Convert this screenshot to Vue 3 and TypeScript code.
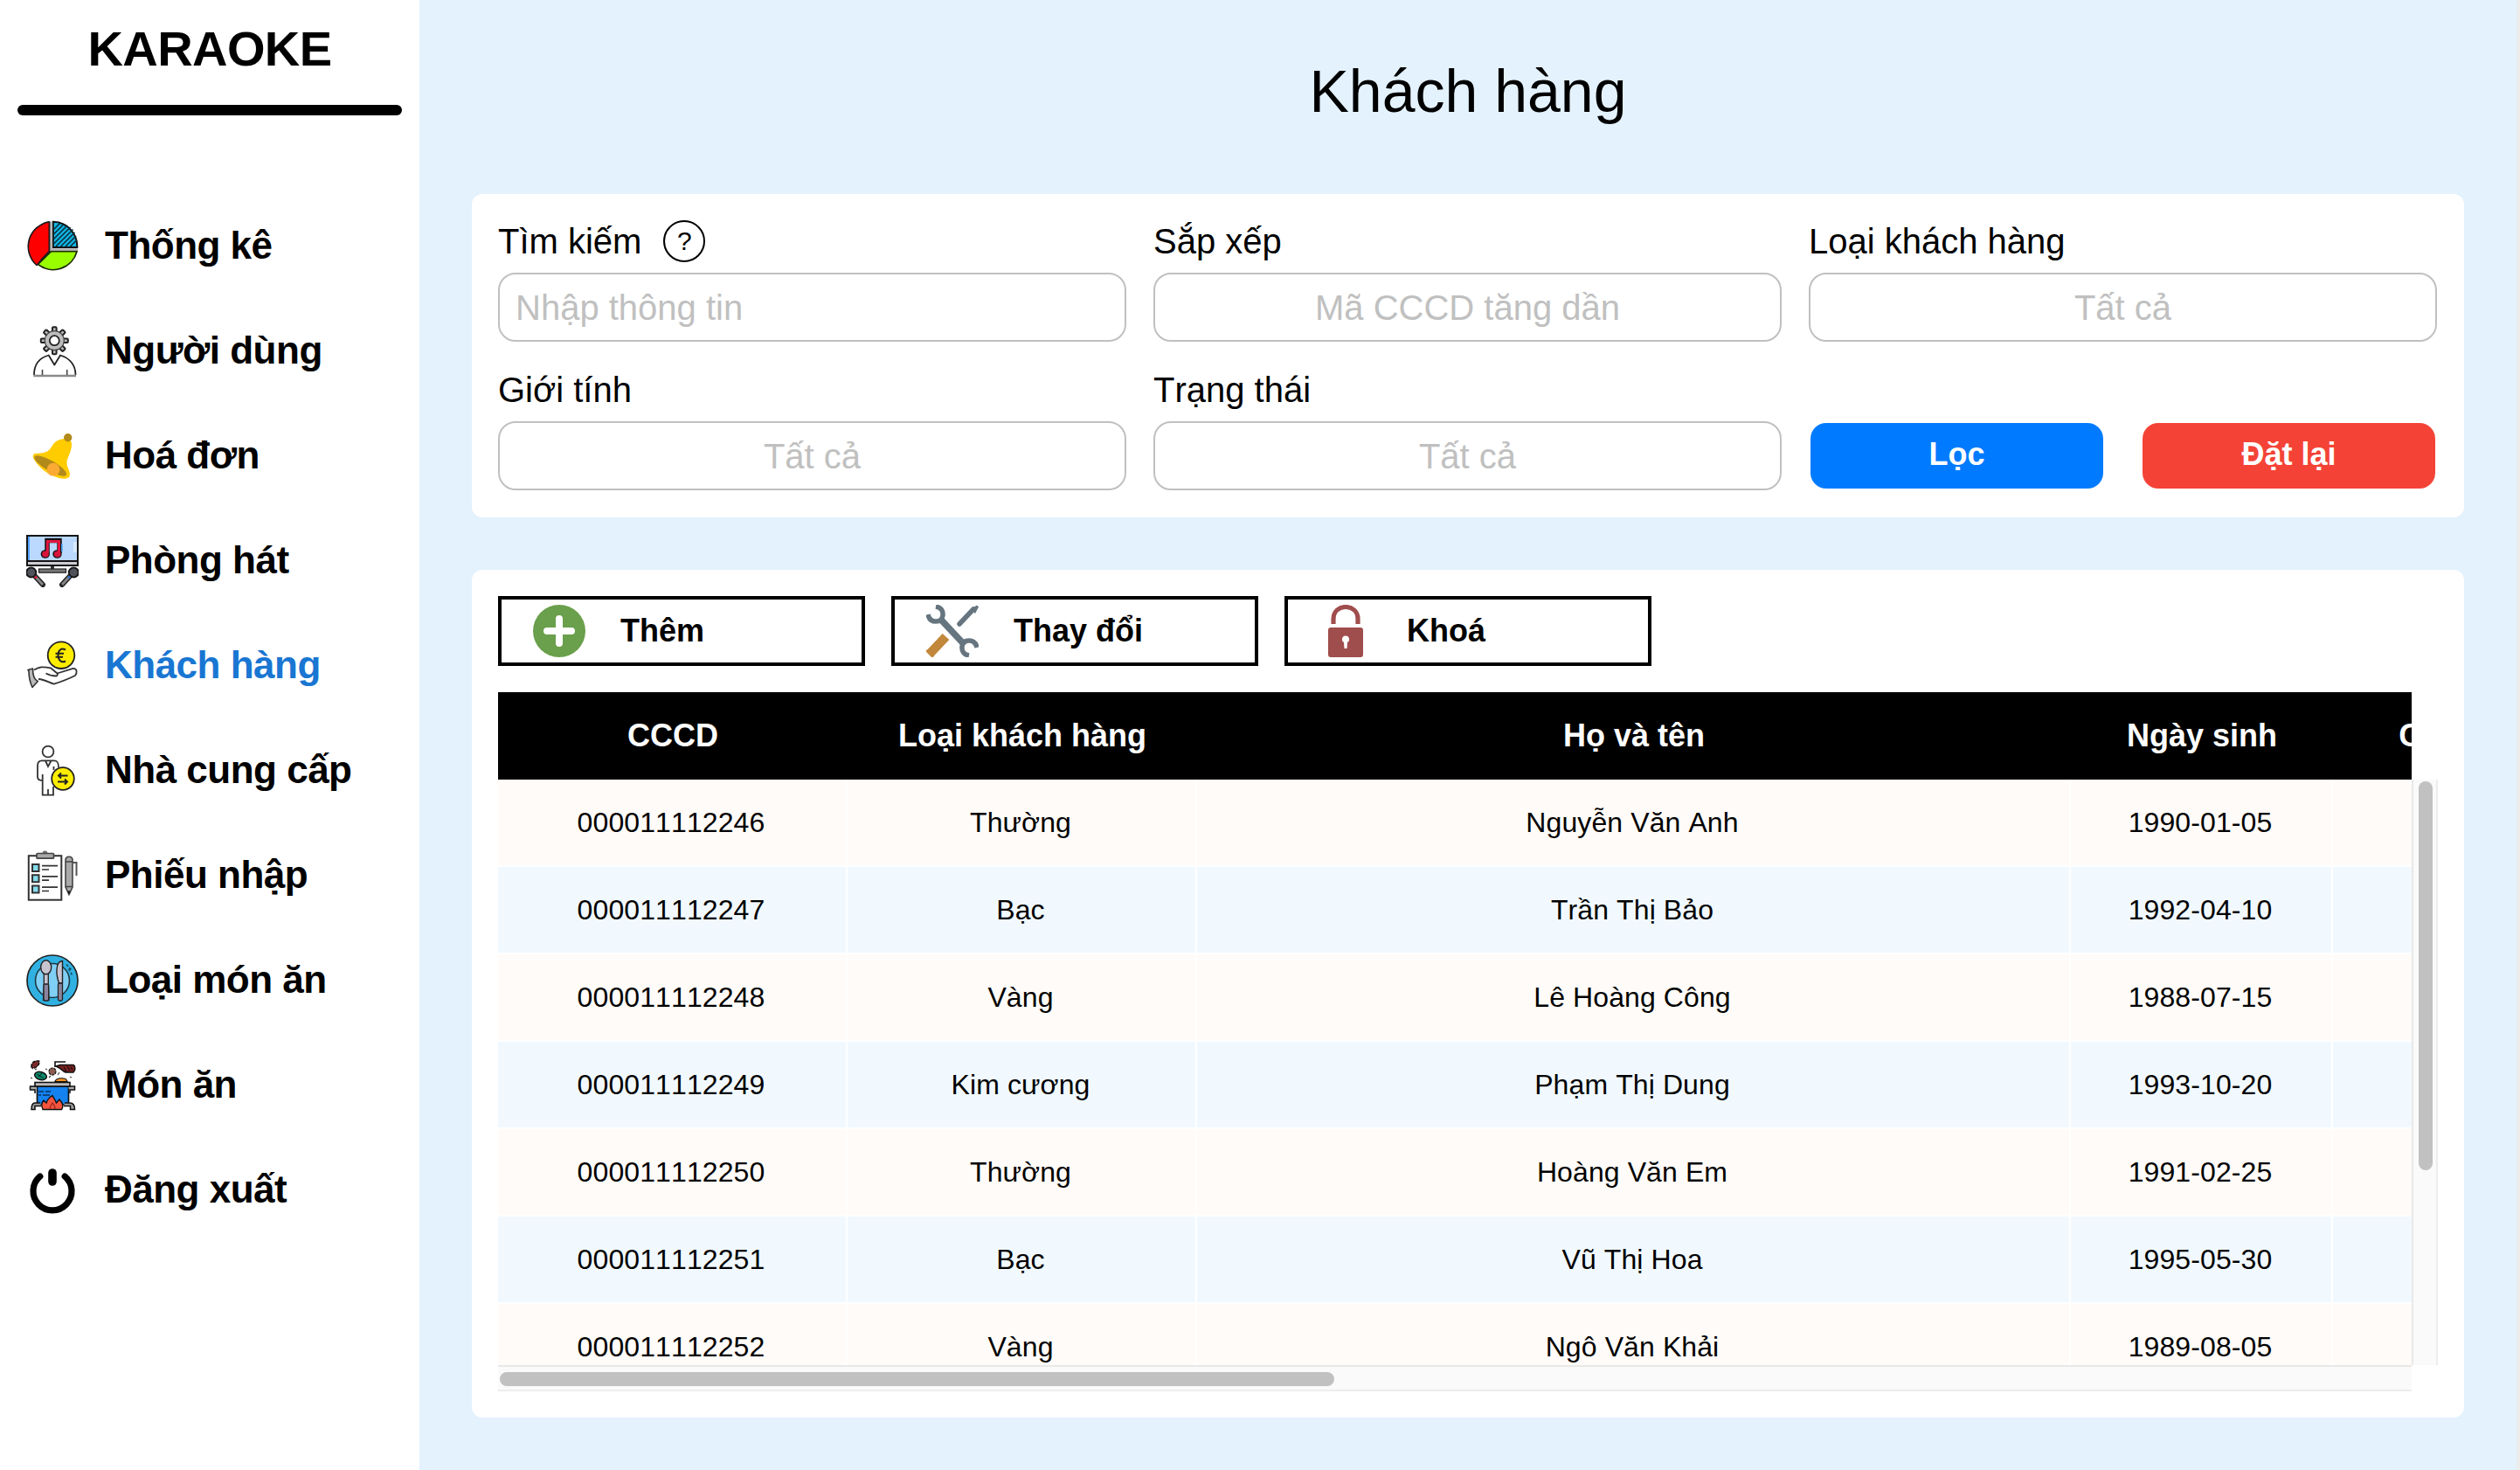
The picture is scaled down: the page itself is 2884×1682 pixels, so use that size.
<script setup lang="ts">
interface MenuItem {
  icon: string
  label: string
  active?: boolean
}

interface Customer {
  id: string
  type: string
  name: string
  birthday: string
}

const menu: MenuItem[] = [
  { icon: 'chart', label: 'Thống kê' },
  { icon: 'user', label: 'Người dùng' },
  { icon: 'bell', label: 'Hoá đơn' },
  { icon: 'room', label: 'Phòng hát' },
  { icon: 'customer', label: 'Khách hàng', active: true },
  { icon: 'supplier', label: 'Nhà cung cấp' },
  { icon: 'receipt', label: 'Phiếu nhập' },
  { icon: 'plate', label: 'Loại món ăn' },
  { icon: 'pot', label: 'Món ăn' },
  { icon: 'power', label: 'Đăng xuất' },
]

const columns: string[] = ['CCCD', 'Loại khách hàng', 'Họ và tên', 'Ngày sinh', 'Giới tính']

const customers: Customer[] = [
  { id: '000011112246', type: 'Thường', name: 'Nguyễn Văn Anh', birthday: '1990-01-05' },
  { id: '000011112247', type: 'Bạc', name: 'Trần Thị Bảo', birthday: '1992-04-10' },
  { id: '000011112248', type: 'Vàng', name: 'Lê Hoàng Công', birthday: '1988-07-15' },
  { id: '000011112249', type: 'Kim cương', name: 'Phạm Thị Dung', birthday: '1993-10-20' },
  { id: '000011112250', type: 'Thường', name: 'Hoàng Văn Em', birthday: '1991-02-25' },
  { id: '000011112251', type: 'Bạc', name: 'Vũ Thị Hoa', birthday: '1995-05-30' },
  { id: '000011112252', type: 'Vàng', name: 'Ngô Văn Khải', birthday: '1989-08-05' },
]

const gearTeeth: number[] = [0, 45, 90, 135, 180, 225, 270, 315]
</script>

<template>
  <div class="app">
    <aside class="sidebar">
      <div class="brand">KARAOKE</div>
      <div class="rule"></div>
      <nav class="menu">
        <a v-for="item in menu" :key="item.label" class="menu-item" :class="{ active: item.active }">
          <svg class="icon" viewBox="0 0 60 60" fill="none">
            <g v-if="item.icon === 'chart'">
              <path d="M26.500 2A28 28 0 0 0 12 50.500L26.500 35.500Z" fill="#f00" stroke="#1c1c1c" stroke-width="1.600" />
              <path d="M30.800 1.800A28 28 0 0 1 58.300 31H30.800Z" fill="#12b5e5" stroke="#111" stroke-width="2" />
              <path d="M31.500 10.500L38.500 3.500M31.500 16L43 4.500M31.500 21.500L47 6M31.500 27L50.500 8M34 30L53.500 10.500M39.500 30L55.500 14M45 30L57 18M50.500 30L58 22.500" stroke="#06323f" stroke-width="1.700" />
              <path d="M28.500 1.500V33.300H59" stroke="#b4b4b4" stroke-width="2.200" />
              <path d="M13.500 50.500L28.500 35.700H58A28 28 0 0 1 13.500 50.500Z" fill="#9f0" stroke="#1c2c00" stroke-width="1.700" />
              <path d="M26.500 1.900A28.500 28.500 0 0 0 12 51.500L16 46L20 20Z" fill="#f00" />
              <path d="M26.500 1.900A28.500 28.500 0 0 0 12 51.500L26.500 35.500V1.900" stroke="#1c1c1c" stroke-width="1.600" />
            </g>
            <g v-else-if="item.icon === 'user'">
              <g fill="#bdbdbd" stroke="#222" stroke-width="2">
                <rect v-for="a in gearTeeth" :key="a" x="30" y="2.200" width="4.600" height="8" rx="1" :transform="`rotate(${a} 32.300 17.700)`" />
              </g>
              <circle cx="32.300" cy="17.700" r="11" fill="#bdbdbd" stroke="#444" stroke-width="1.200" />
              <circle cx="32.300" cy="17.700" r="5.500" fill="#fff" stroke="#222" stroke-width="1.800" />
              <path d="M9 57C9 47 13 38 25.700 34.500L32.300 45.500L39 34.500C51 38 56.500 47 56.500 57" stroke="#222" stroke-width="1.800" stroke-linejoin="round" />
              <path d="M8.300 58H57" stroke="#8a8a8a" stroke-width="2.400" />
              <path d="M18.500 51V57M46.700 51V57" stroke="#444" stroke-width="1.600" />
            </g>
            <g v-else-if="item.icon === 'bell'">
              <path d="M45 10C37 10 32 13.500 28.500 20C25 26 19 26.500 10 27C7 28 7 31 9.500 34.500C15 43 24 51 36.700 54.700C41 56 46 56.500 49 54C51 51 49.500 47 48 44C45.500 38 46.500 35 48.500 30C51 24 53 18 51.500 13.500C50 10.500 48 10 45 10Z" fill="#fc0" />
              <ellipse cx="27.700" cy="41" rx="21" ry="6" fill="#b28a1b" transform="rotate(30 27.700 41)" />
              <circle cx="31" cy="45.200" r="7.400" fill="#fbab33" />
              <circle cx="47.700" cy="8.800" r="4.700" fill="#b28a1b" />
            </g>
            <g v-else-if="item.icon === 'room'">
              <rect width="60" height="36" fill="#151515" />
              <rect x="2" y="2" width="56" height="27" fill="#bbd9ff" />
              <path d="M3 2V29" stroke="#56a5ff" stroke-width="2" />
              <path d="M54 8V20H58V8Z" fill="#d9eaff" />
              <rect x="2" y="31" width="56" height="3" fill="#ceccd3" />
              <path d="M24 21V6.500H38V21" stroke="#151515" stroke-width="5.500" />
              <path d="M40.800 10V19" stroke="#3f9af8" stroke-width="1.500" />
              <ellipse cx="21.800" cy="22" rx="5.200" ry="4.800" fill="#151515" />
              <ellipse cx="35.500" cy="22" rx="5.200" ry="4.800" fill="#151515" />
              <path d="M24.300 21V7.500H37.500V21" stroke="#e5153f" stroke-width="3" />
              <ellipse cx="22" cy="22" rx="3.800" ry="3.400" fill="#d9143b" />
              <ellipse cx="35.700" cy="22" rx="3.800" ry="3.400" fill="#d9143b" />
              <path d="M30 36V40" stroke="#333" stroke-width="4" />
              <rect x="14.500" y="39" width="31" height="4.200" fill="#777" stroke="#222" stroke-width="1.200" />
              <path d="M8 45L19 57" stroke="#222" stroke-width="6" stroke-linecap="round" />
              <path d="M8 45L19 57" stroke="#858585" stroke-width="3" />
              <circle cx="5.700" cy="43" r="5.500" fill="#50525c" stroke="#171717" stroke-width="2" />
              <circle cx="11" cy="48.500" r="1.500" fill="#d9143b" />
              <path d="M52 45L41 57" stroke="#222" stroke-width="6" stroke-linecap="round" />
              <path d="M52 45L41 57" stroke="#858585" stroke-width="3" />
              <circle cx="54.300" cy="43" r="5.500" fill="#50525c" stroke="#171717" stroke-width="2" />
              <circle cx="49" cy="48.500" r="1.500" fill="#2f6fd0" />
            </g>
            <g v-else-if="item.icon === 'customer'">
              <circle cx="40" cy="17.700" r="15.300" fill="#ffed00" stroke="#222" stroke-width="1.800" />
              <path d="M45 11.500C40 9 36.500 12 36.500 17.500S40 27 45 24.500M33.500 15.700H43M33.500 19.700H42" stroke="#222" stroke-width="2" />
              <path d="M2 34.500L7.500 33C7.500 40 9 46 13.300 47.500L7 54.500C4.500 49 3 43 3 36Z" fill="#b9b9b9" stroke="#333" stroke-width="1.600" stroke-linejoin="round" />
              <path d="M9 34.500C15 31 19 30.500 28 32.300L35.500 38.500L53.500 32.800C58.500 32.500 58.500 38 56 41C48 45 40 48 31.700 50.700C26 49 21 45.500 14 45M22.500 38.500C26 40.500 30 41.500 34.500 41.500C36.500 40.500 35.500 38.500 35.500 38.500" stroke="#333" stroke-width="1.800" stroke-linejoin="round" />
            </g>
            <g v-else-if="item.icon === 'supplier'">
              <circle cx="25" cy="8" r="6.400" stroke="#333" stroke-width="1.800" />
              <path d="M37 26C37 20 35.500 18.300 32 18.300H18C14 18.300 13 20.500 13 24V37C13 40 15 41 18.500 41M18.700 34V57.700H31V48M25 51V57M22 18.500L25 25L28.500 18.500M31.500 25V29" stroke="#333" stroke-width="1.800" />
              <circle cx="42" cy="39" r="12.800" fill="#ffed00" stroke="#222" stroke-width="1.800" />
              <path d="M47.500 35.500H37M40 32.500L37 35.500L40 38.500M36 42.500H47M44 39.500L47 42.500L44 45.500" stroke="#222" stroke-width="1.900" />
            </g>
            <g v-else-if="item.icon === 'receipt'">
              <rect x="2.800" y="7.200" width="37.500" height="50.500" stroke="#333" stroke-width="2" />
              <rect x="18.700" y="1.500" width="5.500" height="5" rx="2" fill="#777" />
              <rect x="12" y="4.500" width="19.500" height="5.700" rx="1" fill="#a8a8a8" stroke="#444" stroke-width="1.700" />
              <g v-for="y in [17, 29.200, 41.500]" :key="y">
                <rect x="7" :y="y" width="7.500" height="8" fill="#86dcec" stroke="#333" stroke-width="2" />
                <path :d="`M18 ${y + 1.700}H36M18 ${y + 6}H26`" stroke="#333" stroke-width="1.700" />
              </g>
              <path d="M45 43V12C45 7 53 7 53 12V43L49 51.500Z" fill="#a9a9a9" stroke="#444" stroke-width="1.600" />
              <path d="M45 42.500H53M45 14H53" stroke="#444" stroke-width="1.600" />
              <path d="M47.300 47.500L49 51.500L50.700 47.500Z" fill="#111" />
              <path d="M53 15H57.500V30" stroke="#555" stroke-width="2" />
            </g>
            <g v-else-if="item.icon === 'plate'">
              <circle cx="30" cy="30" r="29" fill="#30b1e2" stroke="#222" stroke-width="1.700" />
              <circle cx="30" cy="30" r="19.500" fill="#80cff5" stroke="#1d3844" stroke-width="1.600" />
              <path d="M20.300 22H25.300V34L26 52.500H19.500L20.300 34Z" fill="#c7c3cf" stroke="#222" stroke-width="1.300" />
              <rect x="20" y="34" width="5.700" height="19" rx="1.500" fill="#8b849c" stroke="#222" stroke-width="1.300" />
              <ellipse cx="22.700" cy="14.800" rx="6" ry="8" fill="#c7c3cf" stroke="#222" stroke-width="1.400" />
              <path d="M41.500 7.500V33H37.500C34 23 33 8 41.500 7.500Z" fill="#c7c3cf" stroke="#222" stroke-width="1.400" />
              <rect x="36.500" y="33" width="5" height="20" rx="1.500" fill="#8b849c" stroke="#222" stroke-width="1.300" />
              <path d="M46 11.500L52 18M48.500 16.500L53 24.500" stroke="#17495d" stroke-width="1.500" stroke-dasharray="3 2" />
            </g>
            <g v-else-if="item.icon === 'pot'">
              <path d="M6 9C5.500 4 9 1.500 14.500 2C16.500 5 12 10 7.500 10.500Z" fill="#7a2a2a" stroke="#111" stroke-width="1.500" stroke-dasharray="4 1" />
              <ellipse cx="16.500" cy="19" rx="7" ry="4.500" fill="#0b8c6d" stroke="#111" stroke-width="1.500" transform="rotate(15 16.500 19)" />
              <path d="M12 17L20 22M14 20L18 16" stroke="#063b2e" stroke-width="1.300" />
              <circle cx="30" cy="14" r="4" fill="#8c5d52" stroke="#111" stroke-width="1.200" stroke-dasharray="3 1" />
              <path d="M33 9V3H45" stroke="#111" stroke-width="1.600" />
              <path d="M34 8L39 6.500H54C56.500 8 56.500 13 54 15H45C42 14 40 10 34 8Z" fill="#7a2020" stroke="#111" stroke-width="1.500" />
              <path d="M43 9L46 14M47 8L50 13M51 9L53 12" stroke="#26100f" stroke-width="1.400" />
              <path d="M5 21L7 22M10 12L12 11M22 11L24 12M26 21L28 19M36 18L38 15M50 20L52 21" stroke="#444" stroke-width="1.200" />
              <path d="M33 25.500C34 21 46 20 47 25.500Z" fill="#f6921e" stroke="#111" stroke-width="1.200" />
              <path d="M12.500 31H48.500V48C48.500 51 46 52 44 52H17C14 52 12.500 50 12.500 48Z" fill="#1482ef" stroke="#111" stroke-width="1.700" />
              <path d="M14 37H20M22 37H28M14 41H17M19 41H27" stroke="#073261" stroke-width="1.500" />
              <path d="M12 31H4.500V35H10V39M48 31H55.500V35H50V39" fill="#aaa" stroke="#111" stroke-width="1.500" />
              <rect x="10" y="26.500" width="40" height="4.500" fill="#bcbcbc" stroke="#111" stroke-width="1.600" />
              <path d="M16 50H10C7 50 6 52 6 57.500H10V53.500H17M44 50H50C53 50 55.500 52 55.500 57.500H50.500V53.500H43" fill="#9d9d9d" stroke="#111" stroke-width="1.500" />
              <path d="M19 57.500C17 53 18 49 20 47L23 50C24 47 26 44 30 41.500C31 44 33 46 34.500 50L38 46C41 49 43.500 53 40.500 57.500Z" fill="#f5543e" stroke="#111" stroke-width="1.400" />
              <path d="M27 57C27 54 29 52 30 50C31.500 52 33.500 54 33 57" stroke="#9d281d" stroke-width="1.200" />
            </g>
            <g v-else>
              <path d="M15.800 14A22 22 0 1 0 44.200 14" stroke="#000" stroke-width="7.200" stroke-linecap="round" />
              <path d="M30 10V20" stroke="#000" stroke-width="9.600" stroke-linecap="round" />
            </g>
          </svg>
          <span class="menu-label">{{ item.label }}</span>
        </a>
      </nav>
    </aside>

    <main class="content">
      <h1 class="title">Khách hàng</h1>

      <section class="card filters">
        <div class="field">
          <label class="label">Tìm kiếm <span class="help">?</span></label>
          <div class="input left">Nhập thông tin</div>
        </div>
        <div class="field">
          <label class="label">Sắp xếp</label>
          <div class="input">Mã CCCD tăng dần</div>
        </div>
        <div class="field">
          <label class="label">Loại khách hàng</label>
          <div class="input">Tất cả</div>
        </div>
        <div class="field">
          <label class="label">Giới tính</label>
          <div class="input">Tất cả</div>
        </div>
        <div class="field">
          <label class="label">Trạng thái</label>
          <div class="input">Tất cả</div>
        </div>
        <div class="actions">
          <button class="btn primary">Lọc</button>
          <button class="btn danger">Đặt lại</button>
        </div>
      </section>

      <section class="card list">
        <div class="toolbar">
          <button class="tool">
            <svg class="icon" viewBox="0 0 60 60">
              <circle cx="30" cy="30" r="30" fill="#6a9f4b" />
              <path d="M30 16V44M16 30H44" stroke="#fff" stroke-width="8" stroke-linecap="round" />
            </svg>
            <span>Thêm</span>
          </button>
          <button class="tool">
            <svg class="icon" viewBox="0 0 60 60" fill="none">
              <path d="M38 22L54 5" stroke="#66757f" stroke-width="5.500" stroke-linecap="round" />
              <path d="M51 5L58 0.500L60 2.500L56 10Z" fill="#66757f" />
              <path d="M22.500 36.500L5 55" stroke="#c1873b" stroke-width="10.500" />
              <path d="M2 53L7 58" stroke="#c1873b" stroke-width="4" stroke-linecap="round" />
              <path d="M16 16L44 46" stroke="#66757f" stroke-width="7.500" />
              <path d="M11 2C17 3 19.500 7 19 12C18.500 16.500 16 19 11 19C6 19 3 16 2 11" stroke="#66757f" stroke-width="5.500" />
              <path d="M49 58C43 57 40.500 53 41 48C41.500 43.500 44 41 49 41C54 41 57 44 58 49" stroke="#66757f" stroke-width="5.500" />
            </svg>
            <span>Thay đổi</span>
          </button>
          <button class="tool">
            <svg class="icon" viewBox="0 0 60 60" fill="none">
              <path d="M16 22V16C16 -2 44 -2 44 16V22" stroke="#a04d4e" stroke-width="5.200" />
              <rect x="10" y="26" width="40" height="34" rx="3" fill="#a04d4e" />
              <path d="M30 35.500A4 4 0 0 0 28 43L28.500 50H31.500L32 43A4 4 0 0 0 30 35.500Z" fill="#fff" />
            </svg>
            <span>Khoá</span>
          </button>
        </div>

        <div class="table">
          <div class="grid head">
            <div v-for="c in columns" :key="c" class="th">{{ c }}</div>
          </div>
          <div class="body">
            <div class="rows">
              <div v-for="c in customers" :key="c.id" class="grid row">
                <div class="td">{{ c.id }}</div>
                <div class="td">{{ c.type }}</div>
                <div class="td">{{ c.name }}</div>
                <div class="td">{{ c.birthday }}</div>
                <div class="td"></div>
              </div>
            </div>
            <div class="vbar"><div class="vthumb"></div></div>
          </div>
          <div class="hbar"><div class="hthumb"></div></div>
        </div>
      </section>
    </main>
    <div class="edge"></div>
  </div>
</template>

<style>
html,
body {
  margin: 0;
  overflow: hidden;
}
</style>

<style scoped>
* {
  box-sizing: border-box;
}

.app {
  display: flex;
  width: 2884px;
  height: 1682px;
  overflow: hidden;
  background: #e3f2fd;
  color: #000;
  font-family: 'Liberation Sans', Arial, sans-serif;
}

.sidebar {
  display: flex;
  flex-direction: column;
  flex: none;
  width: 480px;
  background: #fff;
}

.brand {
  height: 120px;
  font-size: 56px;
  font-weight: 700;
  letter-spacing: -0.6px;
  line-height: 112px;
  text-align: center;
}

.rule {
  height: 12px;
  margin: 0 20px 90px;
  border-radius: 6px;
  background: #000;
}

.menu-item {
  display: flex;
  align-items: center;
  gap: 30px;
  height: 120px;
  padding-left: 30px;
  font-size: 44px;
  font-weight: 700;
  letter-spacing: -0.5px;
  white-space: nowrap;
}

.menu-label {
  padding-bottom: 2px;
}

.menu-item.active {
  color: #1976d2;
}

.icon {
  flex: none;
  width: 60px;
  height: 60px;
}

.content {
  display: flex;
  flex-direction: column;
  flex: none;
  width: 2400px;
  padding: 0 60px;
}

.edge {
  flex: none;
  width: 4px;
  background: #ececec;
}

.title {
  height: 222px;
  margin: 0;
  font-size: 68px;
  font-weight: 400;
  line-height: 208px;
  text-align: center;
}

.card {
  padding: 30px;
  border-radius: 12px;
  background: #fff;
}

.filters {
  display: grid;
  grid-template-columns: repeat(3, 720px);
  grid-template-rows: 140px 140px;
  gap: 30px;
  height: 370px;
  margin-bottom: 60px;
}

.label {
  display: flex;
  align-items: center;
  height: 60px;
  padding-bottom: 12px;
  font-size: 40px;
  font-kerning: none;
  line-height: 48px;
}

.help {
  display: flex;
  align-items: center;
  justify-content: center;
  width: 48px;
  height: 48px;
  margin-left: 25px;
  border: 2px solid #000;
  border-radius: 50%;
  font-size: 30px;
}

.input {
  display: flex;
  align-items: center;
  justify-content: center;
  width: 719px;
  height: 79px;
  padding-top: 1px;
  border: 2px solid #c0c0c0;
  border-radius: 20px;
  color: #c0c0c0;
  font-size: 40px;
}

.input.left {
  justify-content: flex-start;
  padding-left: 18px;
}

.actions {
  display: flex;
  align-items: flex-end;
  justify-content: space-between;
  padding: 0 3px 3px 2px;
}

.btn {
  width: 335px;
  height: 75px;
  padding: 0 0 3px;
  border: 0;
  border-radius: 18px;
  color: #fff;
  font: 700 36px 'Liberation Sans', Arial, sans-serif;
}

.primary {
  background: #007bff;
}

.danger {
  background: #f44336;
}

.list {
  height: 970px;
}

.toolbar {
  display: flex;
  gap: 30px;
  margin-bottom: 30px;
}

.tool {
  display: flex;
  align-items: center;
  gap: 40px;
  width: 420px;
  height: 80px;
  padding: 0 36px;
  border: 4px solid #000;
  background: #fff;
  color: #000;
  font: 700 36px 'Liberation Sans', Arial, sans-serif;
}

.grid {
  display: grid;
  grid-template-columns: 400px 400px 1000px 300px 300px;
}

.head {
  width: 2190px;
  height: 100px;
  overflow: hidden;
  background: #000;
  color: #fff;
  font-size: 36px;
  font-weight: 700;
  line-height: 100px;
  text-align: center;
}

.body {
  display: flex;
  height: 670px;
}

.rows {
  flex: none;
  width: 2190px;
  overflow: hidden;
}

.td {
  height: 100px;
  padding-right: 2px;
  border-right: 2px solid #fff;
  border-bottom: 2px solid #fff;
  background: #fffbf8;
  font-size: 32px;
  font-kerning: none;
  letter-spacing: 0.1px;
  line-height: 98px;
  text-align: center;
}

.row:nth-child(even) .td {
  background: #f1f9ff;
}

.vbar {
  width: 30px;
  padding: 2px 4px 0 6px;
  border-right: 2px solid #ededed;
  border-left: 2px solid #e8e8e8;
  background: #fafafa;
}

.vthumb {
  width: 16px;
  height: 445px;
  border-radius: 8px;
  background: #c1c1c1;
}

.hbar {
  width: 2190px;
  height: 30px;
  padding: 6px 0 0 2px;
  border-top: 2px solid #e8e8e8;
  border-bottom: 2px solid #ededed;
  background: #fafafa;
}

.hthumb {
  width: 955px;
  height: 16px;
  border-radius: 8px;
  background: #c1c1c1;
}
</style>
